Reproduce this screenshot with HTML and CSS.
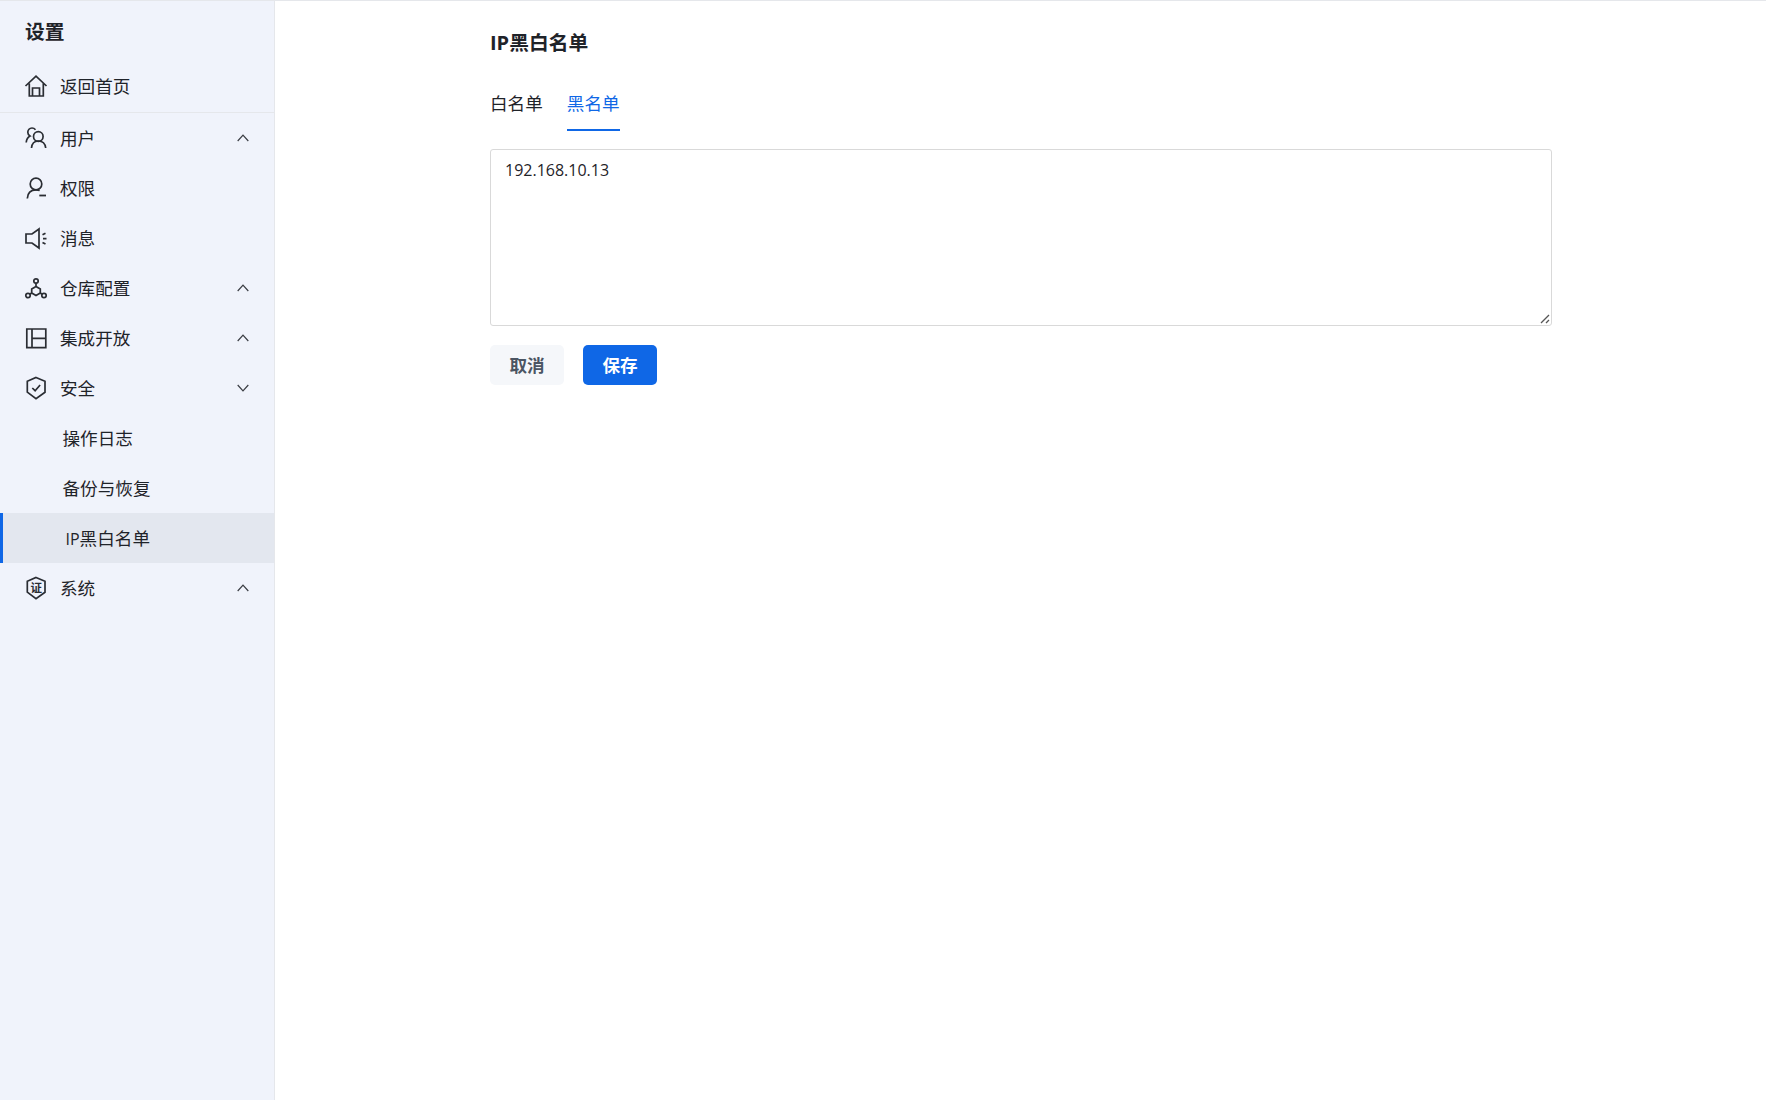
FILE: index.html
```html
<!DOCTYPE html>
<html lang="zh-CN">
<head>
<meta charset="utf-8">
<title>IP黑白名单</title>
<link rel="stylesheet" href="styles.css">
</head>
<body>
<div class="app">
  <aside class="sidebar">
    <h2 class="side-title">设置</h2>
    <div class="home-group">
      <a class="item">
        <svg class="icon" viewBox="0 0 24 24"><path d="M1.500 12 12 2.200 22.500 12M5.300 9.500V22h14V9.500M8.500 22v-8h7v8"/></svg>
        <span class="label">返回首页</span>
      </a>
    </div>
    <nav class="nav">
      <a class="item">
        <svg class="icon" viewBox="0 0 24 24"><circle cx="14.300" cy="10.500" r="4.800"/><path d="M7.500 22c.4-4.500 3-7 6.800-7s6.900 2.500 7.400 7M11.500 3.800C10.500 2.600 9.500 2 8 2 5.500 2 3.800 4 3.800 6.300c0 1.700.8 3 2.200 3.800-2.300 1.200-3.500 3.400-3.800 6.400"/></svg>
        <span class="label">用户</span>
        <svg class="chev" viewBox="0 0 12 8"><path d="M.7 7 6 1.200 11.300 7"/></svg>
      </a>
      <a class="item">
        <svg class="icon" viewBox="0 0 24 24"><circle cx="12" cy="8" r="5.800"/><path d="M3.300 22.500c.3-5.500 3.700-8.700 8.700-8.700 1.400 0 2.600.2 3.700.7"/><path class="thick" d="M15.300 19.500H22"/></svg>
        <span class="label">权限</span>
      </a>
      <a class="item">
        <svg class="icon" viewBox="0 0 24 24"><path d="M15 3 8 8H2v9h6l7 5z"/><path class="thick" d="M18.500 8.700l3-1.500M19 12.700h3.500M18.500 16.500l3 1.500"/></svg>
        <span class="label">消息</span>
      </a>
      <a class="item">
        <svg class="icon" viewBox="0 0 24 24"><circle cx="12" cy="5" r="2.200"/><circle cx="4" cy="19.500" r="2.200"/><circle cx="20" cy="19.500" r="2.200"/><path d="M12 7.200V10.500M5.800 18.200 8 16.800M18.200 18.200 16 16.800M12 10.500 16.300 13v4L12 19.500 7.700 17v-4z"/></svg>
        <span class="label">仓库配置</span>
        <svg class="chev" viewBox="0 0 12 8"><path d="M.7 7 6 1.200 11.300 7"/></svg>
      </a>
      <a class="item">
        <svg class="icon" viewBox="0 0 24 24"><path d="M2.800 3h19v18.700h-19zM8 3v18.700M8 12.300h13.800"/></svg>
        <span class="label">集成开放</span>
        <svg class="chev" viewBox="0 0 12 8"><path d="M.7 7 6 1.200 11.300 7"/></svg>
      </a>
      <a class="item">
        <svg class="icon" viewBox="0 0 24 24"><path d="M12 1.500 21 5.200v11L12 22.800 3.300 16.200v-11z"/><path d="m8.300 12 2.800 2.700 5-5.700"/></svg>
        <span class="label">安全</span>
        <svg class="chev" viewBox="0 0 12 8"><path d="M.7 1 6 6.800 11.300 1"/></svg>
      </a>
      <a class="sub">操作日志</a>
      <a class="sub">备份与恢复</a>
      <a class="sub active"><span class="lat">IP</span>黑白名单</a>
      <a class="item">
        <svg class="icon" viewBox="0 0 24 24"><path d="M12 1.500 21 5.200v11L12 22.800 3.300 16.200v-11z"/><text class="seal" x="12.200" y="16.200" text-anchor="middle">证</text></svg>
        <span class="label">系统</span>
        <svg class="chev" viewBox="0 0 12 8"><path d="M.7 7 6 1.200 11.300 7"/></svg>
      </a>
    </nav>
  </aside>
  <main class="main">
    <div class="content">
      <h1 class="page-title"><span class="lat-title">IP</span>黑白名单</h1>
      <div class="tabs">
        <a class="tab">白名单</a>
        <a class="tab current">黑名单</a>
      </div>
      <div class="box-wrap">
        <textarea class="ip-box">192.168.10.13</textarea>
        <svg class="grip" viewBox="0 0 10 10"><path d="M1 9 9 1M6 9l3-3"/></svg>
      </div>
      <div class="actions">
        <button class="btn cancel">取消</button>
        <button class="btn save">保存</button>
      </div>
    </div>
  </main>
</div>
</body>
</html>
```
FILE: styles.css
```css
* { box-sizing: border-box; }
html, body { margin: 0; height: 100%; }
body {
  font-family: "Noto Sans CJK SC", "Open Sans", sans-serif;
  font-size: 17.6px;
  color: #1f2329;
  background: #fff;
  overflow: hidden;
}
.app {
  display: flex;
  height: 1100px;
  border-top: 1px solid #e5e7eb;
}
.sidebar {
  width: 275px;
  flex: none;
  background: #f0f3fb;
  border-right: 1px solid #e5e7eb;
}
.side-title {
  margin: 0;
  height: 60px;
  padding: 16px 0 0 25px;
  font-size: 19.800px;
  line-height: 28px;
  font-weight: 700;
}
.home-group {
  height: 52px;
  border-bottom: 1px solid #e5e7eb;
}
.item {
  display: flex;
  align-items: center;
  height: 50px;
  padding: 0 25px 0 24px;
}
.icon {
  width: 24px;
  height: 24px;
  flex: none;
  fill: none;
  stroke: #2a2d33;
  stroke-width: 1.700;
}
.icon .thick { stroke-width: 1.800; }
.icon .seal {
  font-size: 11.500px;
  font-weight: 700;
  fill: #2a2d33;
  stroke: none;
}
.label {
  margin-left: 12px;
  flex: 1;
  line-height: 24px;
}
.chev {
  width: 12px;
  height: 8px;
  fill: none;
  stroke: #3a3d43;
  stroke-width: 1.200;
}
.sub {
  display: block;
  height: 50px;
  line-height: 50px;
  padding-left: 62.500px;
}
.sub.active {
  background: #e3e7ef;
  border-left: 3px solid #0f67e6;
  padding-left: 62.500px;
}
.lat {
  font-family: "Open Sans", sans-serif;
  font-size: 16px;
}
.lat-title {
  font-family: "Open Sans", sans-serif;
  font-size: 20px;
}
.main {
  flex: 1;
  min-width: 0;
}
.content {
  width: 1062px;
  margin-left: 215px;
}
.page-title {
  margin: 0;
  height: 55px;
  padding-top: 27px;
  font-size: 19.800px;
  line-height: 28px;
  font-weight: 700;
}
.tabs {
  display: flex;
  gap: 24px;
  margin-top: 21px;
}
.tab {
  height: 54px;
  line-height: 51px;
  border-bottom: 2px solid transparent;
}
.tab.current {
  color: #0f67e6;
  border-bottom-color: #0f67e6;
}
.box-wrap {
  position: relative;
  margin-top: 18px;
}
.ip-box {
  display: block;
  width: 100%;
  height: 177px;
  padding: 8px 14px;
  border: 1px solid #d9d9d9;
  border-radius: 3px;
  font-family: "Open Sans", sans-serif;
  font-size: 16px;
  line-height: 24px;
  color: inherit;
  outline: none;
  resize: none;
}
.grip {
  position: absolute;
  right: 2px;
  bottom: 2px;
  width: 10px;
  height: 10px;
  fill: none;
  stroke: #555;
  stroke-width: 1.300;
}
.actions {
  display: flex;
  gap: 19px;
  margin-top: 19px;
}
.btn {
  width: 74px;
  height: 40px;
  padding: 0 0 2px;
  border: 0;
  border-radius: 5px;
  font: inherit;
  font-weight: 700;
}
.cancel {
  background: #f5f7fa;
  color: #4b5563;
}
.save {
  background: #0f67e6;
  color: #fff;
}
```
